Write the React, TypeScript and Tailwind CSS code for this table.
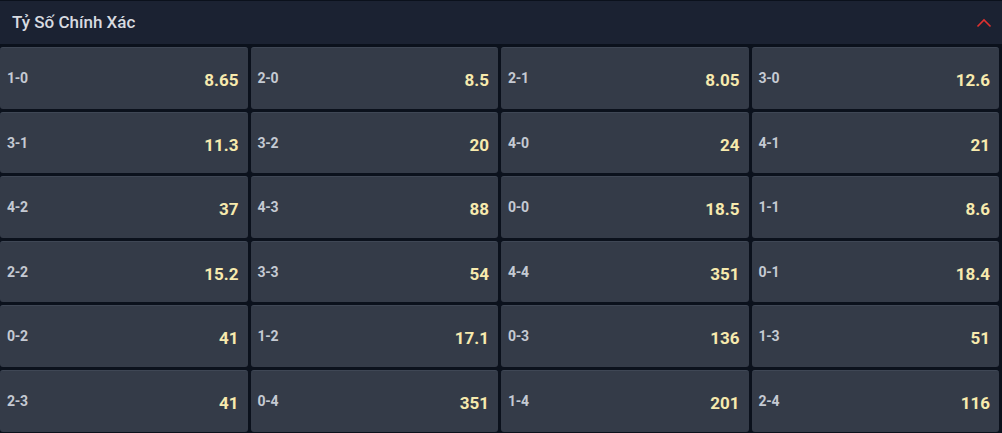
const odds: [string, string][] = [
  ["1-0", "8.65"],
  ["2-0", "8.5"],
  ["2-1", "8.05"],
  ["3-0", "12.6"],
  ["3-1", "11.3"],
  ["3-2", "20"],
  ["4-0", "24"],
  ["4-1", "21"],
  ["4-2", "37"],
  ["4-3", "88"],
  ["0-0", "18.5"],
  ["1-1", "8.6"],
  ["2-2", "15.2"],
  ["3-3", "54"],
  ["4-4", "351"],
  ["0-1", "18.4"],
  ["0-2", "41"],
  ["1-2", "17.1"],
  ["0-3", "136"],
  ["1-3", "51"],
  ["2-3", "41"],
  ["0-4", "351"],
  ["1-4", "201"],
  ["2-4", "116"],
];

function OddCell({ score, price }: { score: string; price: string }) {
  return (
    <button className="relative h-[61.6px] rounded-[3px] bg-[#343b48] border-t border-[#3f4755] text-left cursor-pointer hover:bg-[#3b4351]">
      <span className="absolute left-[7px] top-[20px] text-[14px] font-bold text-[#c5cad3] tracking-[-0.3px]">
        {score}
      </span>
      <span className="absolute right-[9px] top-[20px] text-[17px] font-bold text-[#f7eaae]">
        {price}
      </span>
    </button>
  );
}

export default function App() {
  return (
    <div
      className="w-[1002px] h-[433px] overflow-hidden bg-[#0b111c]"
      style={{ fontFamily: "Roboto, 'Liberation Sans', sans-serif" }}
    >
      <div className="mt-[1px] h-[43px] bg-[#1b2232] flex items-center justify-between pl-[12px] pr-[10px]">
        <span className="text-[17px] font-medium text-[#d8dbe0]">Tỷ Số Chính Xác</span>
        <svg width="16" height="10" viewBox="0 0 16 10">
          <path d="M1.5 8.5 L8 2 L14.5 8.5" fill="none" stroke="#e0312f" strokeWidth="1.6" />
        </svg>
      </div>
      <div className="mt-[3px] w-[999px] grid grid-cols-4 gap-x-[3px] gap-y-[3px]">
        {odds.map(([score, price]) => (
          <OddCell key={score + price} score={score} price={price} />
        ))}
      </div>
    </div>
  );
}
